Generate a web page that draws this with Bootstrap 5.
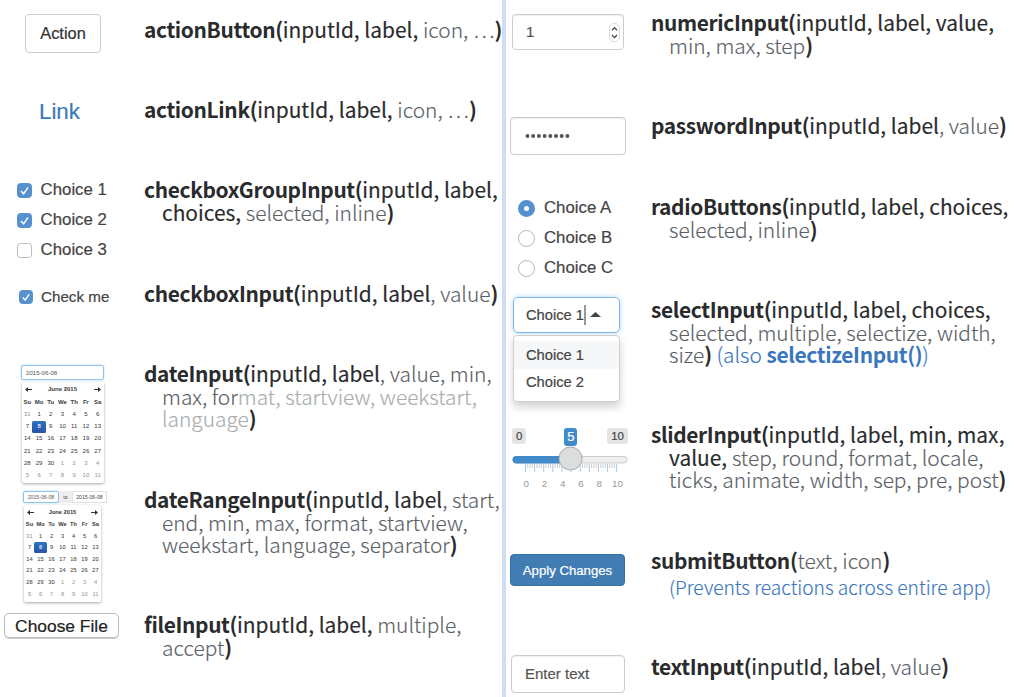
<!DOCTYPE html>
<html lang="en">
<head>
<meta charset="utf-8">
<title>Shiny inputs</title>
<meta name="viewport" content="width=device-width, initial-scale=1">
<link href="https://cdn.jsdelivr.net/npm/bootstrap@5.3.0/dist/css/bootstrap.min.css" rel="stylesheet">
<style>
body{width:1026px;height:697px;overflow:hidden;background:#fff;font-family:"Liberation Sans",Arial,sans-serif;color:#444;font-size:16px;line-height:1.2}
.pane-l{width:502px;padding-top:9px;overflow:hidden}
.pane-r{padding-top:2px;padding-left:0}
.rule{width:4px;background:#cfdcf1}
.entry{height:var(--h)}
.demo{flex:none;-webkit-text-stroke:.2px}
.pane-l .demo{width:144px}
.pane-r .demo{width:145px}
.sig{font-family:"Noto Sans CJK SC","Noto Sans",sans-serif;font-size:20.9px;line-height:22.5px;padding-top:9.3px;color:#2a2b2d;white-space:nowrap;font-weight:400;letter-spacing:0;-webkit-text-stroke:.15px}
.sig div+div{padding-left:18px}
.sig b{font-weight:700;letter-spacing:-.35px;-webkit-text-stroke:0}
.sig i{font-style:normal;font-weight:300;color:#5b5f68;letter-spacing:0}
.sig .faded{color:#a9adae}
.sig .note,.sig .note i{color:#3a76bd}
.sig .small-note{font-size:19.2px;margin-top:4px}
.sig .small-note i{letter-spacing:-.03px}
.h80{--h:80px}.h81{--h:81px}.h103{--h:103px}.h104{--h:104px}.h106{--h:106px}.h125{--h:125px}.h126{--h:126px}
.ctl{border:1px solid #ccc;border-radius:4px;background:#fff;box-shadow:inset 0 1px 1px rgba(0,0,0,.07);font-size:15px;color:#555}
.c-action{margin:5px 0 0 25px;width:76px;height:39px;font-size:16.4px;color:#333;box-shadow:none;border-radius:4px}
.c-link{margin:10px 0 0 39px;font-size:22.3px;color:#3b7ab8}
.opt{height:30px;gap:9px;font-size:16.8px;line-height:1}
.opt.sm{font-size:15.2px;gap:8px}
.box{width:15px;height:15px;border:1px solid #bbb;border-radius:3.5px;background:#fff}
.box.on{background:#5690cf;border-color:#5690cf}
.opt .lbl{padding-top:1px}
.dot{width:17px;height:17px;border:1px solid #b5b5b5;border-radius:50%;background:#fff}
.dot.on{border:6px solid #5690cf}
.cal-in{border:1px solid #8ec3ea;border-radius:2px;box-shadow:0 0 2px #a9d4f2;color:#555}
.tiny{-webkit-text-stroke:0}
.cal{border-radius:2px;box-shadow:0 1px 3px rgba(0,0,0,.35);background:#fff;color:#444;font-size:6px;text-align:center;-webkit-text-stroke:.05px}
.cal .days{display:grid;grid-template-columns:repeat(7,1fr);grid-auto-rows:var(--r);align-items:center}
.cal .head{height:13px;font-weight:700;padding:0 3px}
.cal .out{color:#999}
.cal .pick{background:linear-gradient(#2d74c0,#2a52a8);color:#fff;border-radius:1.5px;align-self:stretch;margin:0 -1px;display:flex;align-items:center;justify-content:center}
.cal.one{--r:12.25px;width:82px;height:101px;margin:2px 0 0 .5px;padding-top:1px}
.cal.two{--r:11.65px;width:77px;height:97px;margin:2px 0 0 1px;padding-top:.5px;font-size:5.7px}
.c-file{margin:9px 0 0 4px;width:115px;height:25px;border:1px solid #bdbdbd;border-radius:5px;font-size:17.4px;color:#222;box-shadow:0 1px 0 #ccc;padding-top:2px}
.spin{width:11px;height:19px;border:1px solid #ddd;border-radius:5px}
.sel{border:1.5px solid #7db5e6;box-shadow:0 0 5px #b5d8f4;border-radius:5px;padding-top:2px}
.menu{border:1px solid #d0d0d0;border-radius:4px;box-shadow:0 5px 9px rgba(0,0,0,.18);background:#fff}
.menu div{height:27.5px;padding:2px 0 0 12px}
.menu div:first-child{background:#f5f7f8}
.tag{height:16px;border-radius:3px;background:#e4e4e4;color:#444;font-size:11.5px;padding-top:1px}
.tag.cur{height:18px;background:#428bca;color:#fff;font-size:13px;margin-left:8px}
.submit{background:#417cb2;border:1px solid #376f9f;border-radius:4px;color:#fff;font-size:13.2px;padding-top:1px}
</style>
</head>
<body class="d-flex">
<main class="pane-l flex-shrink-0">
  <section class="entry h80 d-flex"><div class="demo"><div class="ctl c-action d-flex align-items-center justify-content-center">Action</div></div>
    <div class="sig"><div><b>actionButton(</b>inputId, label, <i>icon, …</i><b>)</b></div></div></section>
  <section class="entry h80 d-flex"><div class="demo"><div class="c-link">Link</div></div>
    <div class="sig"><div><b>actionLink(</b>inputId, label, <i>icon, …</i><b>)</b></div></div></section>
  <section class="entry h104 d-flex"><div class="demo" style="padding:6px 0 0 16.6px">
      <div class="opt d-flex align-items-center"><span class="box on d-flex"><svg viewBox="0 0 13 13"><path d="M3 7l2.6 2.8L10 3.3" fill="none" stroke="#fff" stroke-width="1.5"/></svg></span><span class="lbl">Choice 1</span></div>
      <div class="opt d-flex align-items-center"><span class="box on d-flex"><svg viewBox="0 0 13 13"><path d="M3 7l2.6 2.8L10 3.3" fill="none" stroke="#fff" stroke-width="1.5"/></svg></span><span class="lbl">Choice 2</span></div>
      <div class="opt d-flex align-items-center"><span class="box"></span><span class="lbl">Choice 3</span></div></div>
    <div class="sig"><div><b>checkboxGroupInput(</b>inputId, label,</div><div>choices, <i>selected, inline</i><b>)</b></div></div></section>
  <section class="entry h80 d-flex"><div class="demo" style="padding:9px 0 0 19px">
      <div class="opt sm d-flex align-items-center"><span class="box on d-flex" style="width:14px;height:14px"><svg viewBox="0 0 13 13"><path d="M3 7l2.6 2.8L10 3.3" fill="none" stroke="#fff" stroke-width="1.5"/></svg></span>Check me</div></div>
    <div class="sig"><div><b>checkboxInput(</b>inputId, label<i>, value</i><b>)</b></div></div></section>
  <section class="entry h126 d-flex"><div class="demo" style="padding:12px 0 0 21px">
      <div class="cal-in tiny d-flex align-items-center ps-1" style="width:83px;height:15px;font-size:6.1px">2015-06-08</div>
      <div class="cal one"></div></div>
    <div class="sig"><div><b>dateInput(</b>inputId, label<i>, value, min,</i></div><div><i>max, for<span class="faded">mat, startview, weekstart,</span></i></div><div><i class="faded">language</i><b>)</b></div></div></section>
  <section class="entry h125 d-flex"><div class="demo" style="padding:12px 0 0 23px">
      <div class="tiny d-flex" style="font-size:5.2px;height:12px;width:84px"><div class="cal-in d-flex align-items-center justify-content-center" style="width:36px">2015-06-08</div><div class="d-flex align-items-center justify-content-center" style="width:13px;background:#eee">to</div><div class="d-flex align-items-center justify-content-center border" style="width:35px">2015-06-08</div></div>
      <div class="cal two"></div></div>
    <div class="sig"><div><b>dateRangeInput(</b>inputId, label<i>, start,</i></div><div><i>end, min, max, format, startview,</i></div><div><i>weekstart, language, separator</i><b>)</b></div></div></section>
  <section class="entry h80 d-flex"><div class="demo"><div class="c-file d-flex align-items-center justify-content-center">Choose File</div></div>
    <div class="sig"><div><b>fileInput(</b>inputId, label, <i>multiple,</i></div><div><i>accept</i><b>)</b></div></div></section>
</main>
<div class="rule flex-shrink-0"></div>
<main class="pane-r flex-grow-1">
  <section class="entry h103 d-flex"><div class="demo" style="padding:12px 0 0 6px">
      <div class="ctl d-flex align-items-center justify-content-between" style="width:112px;height:36px;padding:0 3px 0 13px">1<span class="spin d-flex"><svg viewBox="0 0 9 17"><path d="M2 6.2l2.5-2.6L7 6.2M2 11l2.5 2.6L7 11" fill="none" stroke="#444" stroke-width="1.3"/></svg></span></div></div>
    <div class="sig"><div><b>numericInput(</b>inputId, label, value,</div><div><i>min, max, step</i><b>)</b></div></div></section>
  <section class="entry h81 d-flex"><div class="demo" style="padding:12px 0 0 4px">
      <div class="ctl d-flex align-items-center" style="width:116px;height:38px;padding-left:14px"><svg width="46" height="6"><g fill="#555"><circle cx="2.5" cy="3" r="2"/><circle cx="8.2" cy="3" r="2"/><circle cx="13.9" cy="3" r="2"/><circle cx="19.6" cy="3" r="2"/><circle cx="25.3" cy="3" r="2"/><circle cx="31" cy="3" r="2"/><circle cx="36.7" cy="3" r="2"/><circle cx="42.4" cy="3" r="2"/></g></svg></div></div>
    <div class="sig"><div><b>passwordInput(</b>inputId, label<i>, value</i><b>)</b></div></div></section>
  <section class="entry h103 d-flex"><div class="demo" style="padding:7px 0 0 12px">
      <div class="opt d-flex align-items-center"><span class="dot on"></span><span class="lbl">Choice A</span></div>
      <div class="opt d-flex align-items-center"><span class="dot"></span><span class="lbl">Choice B</span></div>
      <div class="opt d-flex align-items-center"><span class="dot"></span><span class="lbl">Choice C</span></div></div>
    <div class="sig"><div><b>radioButtons(</b>inputId, label, choices,</div><div><i>selected, inline</i><b>)</b></div></div></section>
  <section class="entry h125 d-flex"><div class="demo" style="padding:8px 0 0 7px;font-size:14.7px">
      <div class="sel d-flex align-items-center" style="width:107px;height:36px;padding-left:12px">Choice 1<svg width="22" height="22"><path d="M1 0v20" stroke="#777" stroke-width="1.5"/><path d="M6 12h11l-5.5-5z" fill="#444"/></svg></div>
      <div class="menu" style="width:107px;height:67px;margin-top:2px;padding-top:5px"><div class="d-flex align-items-center">Choice 1</div><div class="d-flex align-items-center">Choice 2</div></div></div>
    <div class="sig"><div><b>selectInput(</b>inputId, label, choices,</div><div><i>selected, multiple, selectize, width,</i></div><div><i>size</i><b>)</b> <span class="note"><i>(also </i><b>selectizeInput()</b><i>)</i></span></div></div></section>
  <section class="entry h126 d-flex"><div class="demo" style="padding:14px 0 0 6px">
      <div class="d-flex justify-content-between" style="width:116px;height:18px"><span class="tag d-flex align-items-center px-1">0</span><span class="tag cur d-flex align-items-center" style="padding:0 3px">5</span><span class="tag d-flex align-items-center px-1">10</span></div>
      <svg class="d-block" width="118" height="45" id="slider" font-family="Liberation Sans" font-size="9.8" fill="#999" text-anchor="middle"></svg></div>
    <div class="sig"><div><b>sliderInput(</b>inputId, label, min, max,</div><div>value, <i>step, round, format, locale,</i></div><div><i>ticks, animate, width, sep, pre, post</i><b>)</b></div></div></section>
  <section class="entry h106 d-flex"><div class="demo" style="padding:14px 0 0 4px"><div class="submit d-flex align-items-center justify-content-center" style="width:115px;height:32px">Apply Changes</div></div>
    <div class="sig"><div><b>submitButton(</b><i>text, icon</i><b>)</b></div><div class="note small-note"><i>(Prevents reactions across entire app)</i></div></div></section>
  <section class="entry d-flex"><div class="demo" style="padding:9px 0 0 5px"><div class="ctl d-flex align-items-center" style="width:114px;height:38px;padding-left:13px">Enter text</div></div>
    <div class="sig"><div><b>textInput(</b>inputId, label<i>, value</i><b>)</b></div></div></section>
</main>
<script src="https://cdn.jsdelivr.net/npm/bootstrap@5.3.0/dist/js/bootstrap.bundle.min.js"></script>
<script>
// Month grids for June 2015
document.querySelectorAll('.cal').forEach(function (c) {
  var h = '<div class="head d-flex justify-content-between align-items-center"><svg width="7" height="5"><path d="M0 2.5L3 0v2h4v1H3v2z" fill="#333"/></svg><span>June 2015</span><svg width="7" height="5"><path d="M7 2.5L4 0v2H0v1h4v2z" fill="#333"/></svg></div><div class="days">';
  ['Su','Mo','Tu','We','Th','Fr','Sa'].forEach(function (d) { h += '<b>' + d + '</b>'; });
  for (var i = 0; i < 42; i++) {
    var n = i === 0 ? 31 : i > 30 ? i - 30 : i;
    h += '<span class="' + (i === 0 || i > 30 ? 'out' : i === 8 ? 'pick' : '') + '">' + n + '</span>';
  }
  c.innerHTML = h + '</div>';
});
// Slider track, ticks and labels
var s = '<rect x="1" y="10.5" width="114" height="6.5" rx="3.2" fill="#eee" stroke="#ccc"/><rect x=".5" y="10" width="60" height="7.5" rx="3.7" fill="#428bca"/>';
for (var k = 0; k <= 40; k++) {
  var x = 13.5 + k * 2.28, big = k % 4 === 0;
  s += '<path d="M' + x + ' 18v' + (big ? 8 : 4) + '" stroke="' + (big ? '#a5c9e8' : '#ccc') + '"/>';
  if (k % 8 === 0) s += '<text x="' + (x + .7) + '" y="40.5">' + k / 4 + '</text>';
}
s += '<circle cx="58.5" cy="12.5" r="11.5" fill="#dcdddd" stroke="#aaa"/>';
document.getElementById('slider').innerHTML = s;
</script>
</body>
</html>
